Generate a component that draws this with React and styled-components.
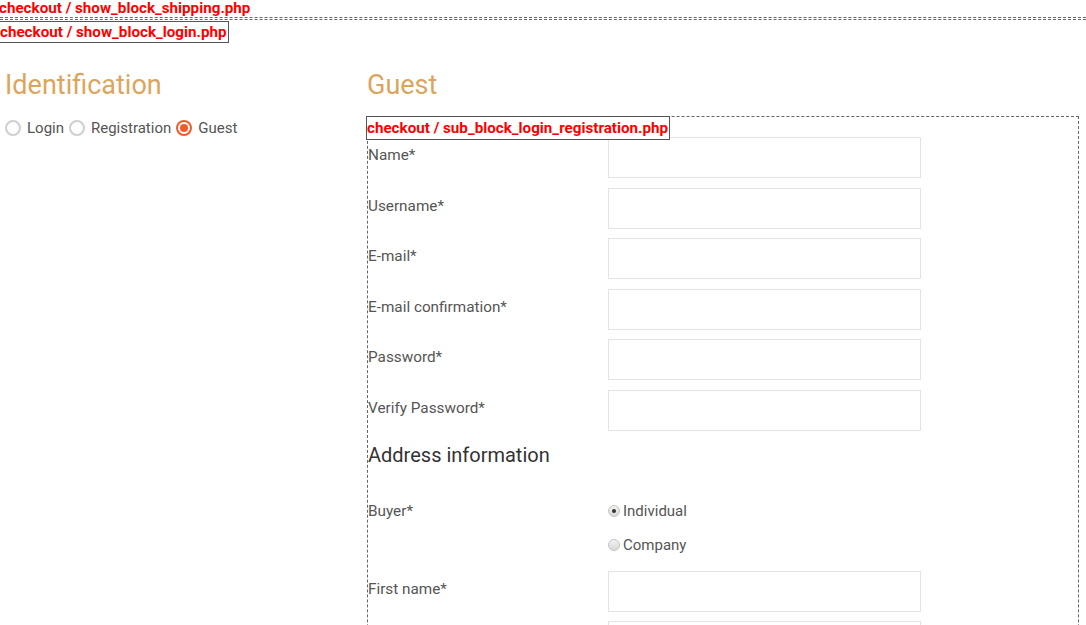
import React from 'react';
import styled, { createGlobalStyle } from 'styled-components';

const GlobalStyle = createGlobalStyle`
  html, body {
    margin: 0;
    padding: 0;
    background: #fff;
    font-family: Roboto, "Liberation Sans", sans-serif;
    overflow: hidden;
  }
`;

const Page = styled.div`
  width: 1086px;
  height: 625px;
  overflow: hidden;
`;

const Tag = styled.div`
  display: block;
  width: fit-content;
  color: #ff0000;
  font-weight: 700;
  font-size: 15.2px;
  line-height: ${(p) => (p.boxed ? '20px' : '17px')};
  padding: ${(p) => (p.boxed ? '0 1px 0 0' : '0')};
  border: ${(p) => (p.boxed ? '1px solid #555' : 'none')};
  background: #fff;
  margin-left: -1px;
`;

const ShippingBlock = styled.div`
  border-top: 1px dashed #666;
  padding-top: 1px;
`;

const LoginBlock = styled.div`
  border-top: 1px dashed #666;
  padding-top: 1px;
`;

const Columns = styled.div`
  display: flex;
  margin-top: 26px;
`;

const LeftCol = styled.div`
  width: 367px;
  padding-left: 5px;
  box-sizing: border-box;
`;

const RightCol = styled.div`
  width: 712px;
`;

const Heading = styled.h2`
  margin: 0;
  font-weight: 400;
  font-size: 27px;
  line-height: 32px;
  color: #dca55e;
`;

const RadioRow = styled.div`
  display: flex;
  align-items: center;
  margin-top: 18px;
`;

const RadioOption = styled.label`
  display: flex;
  align-items: center;
  gap: 6px;
  margin-right: 5px;
  font-size: 15px;
  line-height: 18px;
  color: #555;
`;

const RadioCircle = styled.span`
  width: 16px;
  height: 16px;
  box-sizing: border-box;
  border-radius: 50%;
  border: 2px solid ${(p) => (p.checked ? '#f25a2b' : '#cfcfcf')};
  display: flex;
  align-items: center;
  justify-content: center;
  &::after {
    content: '';
    width: 8px;
    height: 8px;
    border-radius: 50%;
    background: ${(p) => (p.checked ? '#f25a2b' : 'transparent')};
  }
`;

const DashedBox = styled.div`
  position: relative;
  margin-top: 15px;
  border: 1px dashed #666;
  border-bottom: none;
  height: 600px;
  padding-top: 20px;
`;

const BoxTag = styled(Tag)`
  position: absolute;
  top: -1px;
  left: -1px;
  line-height: 22px;
`;

const FormRow = styled.div`
  display: flex;
  height: ${(p) => p.h || '50.6px'};
`;

const Label = styled.div`
  width: 240px;
  font-size: 15.3px;
  line-height: 20px;
  padding-top: ${(p) => p.pt || '8px'};
  color: #555;
`;

const Input = styled.div`
  width: 313px;
  height: 41px;
  box-sizing: border-box;
  border: 1px solid #e3e3e3;
  background: #fff;
`;

const SubHeading = styled.h3`
  margin: 2px 0 0 0;
  font-weight: 400;
  font-size: 20px;
  line-height: 24px;
  color: #333;
  height: 58px;
`;

const ChoiceCol = styled.div`
  display: flex;
  flex-direction: column;
  gap: 14px;
`;

const Choice = styled.label`
  display: flex;
  align-items: center;
  gap: 3px;
  font-size: 15px;
  line-height: 20px;
  color: #555;
`;

const NativeRadio = styled.span`
  width: 12px;
  height: 12px;
  box-sizing: border-box;
  border-radius: 50%;
  border: 1px solid #c4c4c4;
  background: linear-gradient(#f2f2f2, #d8d8d8);
  display: flex;
  align-items: center;
  justify-content: center;
  &::after {
    content: '';
    width: 4px;
    height: 4px;
    border-radius: 50%;
    background: ${(p) => (p.checked ? '#333' : 'transparent')};
  }
`;

const fields = ['Name*', 'Username*', 'E-mail*', 'E-mail confirmation*', 'Password*', 'Verify Password*'];

export default function App() {
  return (
    <Page>
      <GlobalStyle />
      <Tag>checkout / show_block_shipping.php</Tag>
      <ShippingBlock>
        <LoginBlock>
          <Tag boxed>checkout / show_block_login.php</Tag>
          <Columns>
            <LeftCol>
              <Heading>Identification</Heading>
              <RadioRow>
                <RadioOption><RadioCircle />Login</RadioOption>
                <RadioOption><RadioCircle />Registration</RadioOption>
                <RadioOption><RadioCircle checked />Guest</RadioOption>
              </RadioRow>
            </LeftCol>
            <RightCol>
              <Heading>Guest</Heading>
              <DashedBox>
                <BoxTag boxed>checkout / sub_block_login_registration.php</BoxTag>
                {fields.map((f) => (
                  <FormRow key={f}>
                    <Label>{f}</Label>
                    <Input />
                  </FormRow>
                ))}
                <SubHeading>Address information</SubHeading>
                <FormRow h="70px">
                  <Label pt="0">Buyer*</Label>
                  <ChoiceCol>
                    <Choice><NativeRadio checked />Individual</Choice>
                    <Choice><NativeRadio />Company</Choice>
                  </ChoiceCol>
                </FormRow>
                <FormRow>
                  <Label>First name*</Label>
                  <Input />
                </FormRow>
                <FormRow>
                  <Label />
                  <Input />
                </FormRow>
              </DashedBox>
            </RightCol>
          </Columns>
        </LoginBlock>
      </ShippingBlock>
    </Page>
  );
}
